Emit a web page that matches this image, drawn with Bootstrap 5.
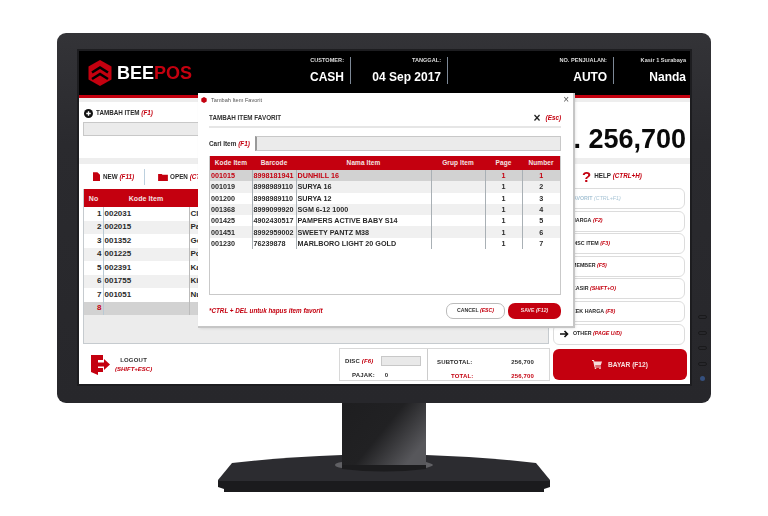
<!DOCTYPE html>
<html lang="id"><head><meta charset="utf-8"><title>BeePOS</title>
<link href="https://cdn.jsdelivr.net/npm/bootstrap@5.3.0/dist/css/bootstrap.min.css" rel="stylesheet">
<style>
html,body{height:516px;overflow:hidden;background:#fff}
body{font-family:"Liberation Sans",Arial,sans-serif;color:#2a2a2a;font-size:7px}
.mon{width:654px;height:370px;margin:33px 0 0 57px;padding:18px 21px 19px 22px;border-radius:9px;background:linear-gradient(180deg,#333337,#2a2a2e 30%,#27272b);position:relative}
.scr{width:611px;height:333px;background:#fff;position:relative;overflow:hidden;box-shadow:0 0 0 2px #1d1d20;filter:blur(.35px)}
.hdr{height:47px;background:#000;border-bottom:3px solid #c4000f;color:#fff}
.logo-t{font-size:18px;font-weight:700;margin-left:5px}
.logo-t span{color:#c4000f}
.hf{height:27px;margin-bottom:5px;text-align:right;display:flex;flex-direction:column;justify-content:space-between;padding-right:6px;border-right:1px solid #7d8896;box-sizing:content-box}
.hf small{font-size:5.6px;font-weight:700;line-height:7px;color:#ddd}
.hf b{font-size:12px;line-height:14px}
.hf.last{border:0;padding-right:0}
.k{color:#c4000f;font-style:italic;font-weight:700}
.lc{width:474px}
.rc{width:137px}
.strip{height:4px;background:#eee}
.band{height:6px;background:#eee}
.top-l{height:56px;padding:6px 4px}
.lab{font-size:6.3px;font-weight:700}
.inp{background:#ebebeb;border:1px solid #c8c8c8;border-radius:0;padding:0;min-height:0}
.i-main{height:14px;margin-top:4px}
.tb{height:25px;padding:0 14px}
.tb-sep{width:1px;height:16px;background:#bcd0de;margin:0 13px 0 10px}
.box{height:155px;margin:0 4px;background:#ececec;border:1px solid #c6cbcf;border-top:0;overflow:hidden}
.gt{table-layout:fixed;margin:0;width:100%;font-weight:700;font-size:8px;--bs-table-bg:transparent;--bs-table-striped-bg:#f0f0f0}
.gt>:not(caption)>*>*{padding:0 1px;border:0;line-height:1;vertical-align:middle;color:#2a2a2a;box-shadow:none}
.gt thead th{background:#c4000f;color:#f3e4e4;text-align:center;font-size:7px;letter-spacing:.1px}
.lt thead tr{height:18px}
.lt tbody tr{height:13.5px;background:#fff}
.lt tbody tr:nth-child(even){background:#f0f0f0}
.lt td:nth-child(1){text-align:right;border-right:1px solid #b9c9d4}
.lt td:nth-child(2){border-right:1px solid #bbb;padding-left:1px}
.lt .cur{background:#d2d2d2!important}
.lt .cur td{color:#c4000f}
.foot-l{height:40px;padding:4px 3px 3px 12px}
.lo{font-size:6px;font-weight:700;line-height:9px;text-align:center;margin-left:5px}
.pnl{width:211px;height:33px;border:1px solid #d8d8d8;font-size:6px;font-weight:700;letter-spacing:.15px}
.pl{width:88px;border-right:1px solid #ccc;padding:7px 5px 2px}
.pr{flex:1;padding:9px 15px 2px 9px}
.i-disc{width:40px;height:10px;margin-left:8px;background:#e9e9e9}
.amt{height:56px;padding:22px 4px 0 0;font-size:27px;font-weight:700;color:#0a0a0a;line-height:30px;white-space:nowrap}
.hlp{height:24px;padding-left:29px;font-size:6.300px;font-weight:700}
.qm{font-size:15px;color:#c4000f;font-weight:700;line-height:1;margin-right:3px}
.rb{width:132px;height:21px;margin-bottom:1.6px;border:1px solid #dcdcdc;border-radius:6px;background:#fff;padding:0 0 0 18px;font-size:5.3px;font-weight:700;text-align:left;color:#2a2a2a;display:flex;align-items:center;--bs-btn-font-size:5.3px;white-space:nowrap}
.rb.off{color:#a9c5d6;padding-left:16px}
.rb.off .k{color:#a9c5d6;font-weight:400}
.rb.oth{padding-left:6px;gap:4px}
.pay{width:134px;height:31px;margin-top:3px;background:#c4000f;border:0;border-radius:6px;color:#f6dcdc;font-size:6.600px;--bs-btn-font-size:6.600px;font-weight:700;display:flex;align-items:center;justify-content:center;gap:6px}
.dlg{position:absolute;left:119px;top:42px;width:375px;height:233px;background:#fff;box-shadow:1px 1px 0 1px #c6c6c6,2px 2px 3px rgba(0,0,0,.15);padding:0 12px 0 11px}
.dt{height:14px;margin:0 -8px;font-size:5.6px;color:#555}
.dh{height:18px;margin-top:3px;border-bottom:2px solid #e6e6e6;font-size:6.300px;font-weight:700;color:#333}
.dc{margin-top:8px;height:15px;font-size:6.400px;font-weight:700}
.i-cari{flex:1;height:15px;margin-left:5px;border-left:2px solid #999}
.dbox{height:139px;margin-top:5px;border:1px solid #c9c9c9;border-top:0;overflow:hidden}
.ft thead tr{height:14px}
.ft tbody tr{height:11.3px;background:#fff}
.ft tbody tr:nth-child(even){background:#f0f0f0}
.ft{font-size:7.2px}
.ft thead th{font-size:6.500px}
.ft td{border-right:1px solid #a9b0b5!important;white-space:nowrap;overflow:hidden}
.ft td:last-child{border-right:0!important}
.ft .sel{background:#d2d2d2!important}
.ft .sel td{color:#c4000f}
.ft .mid{text-align:center}
.df{height:31px}
.note{font-size:6.300px;color:#c4000f;font-style:italic;font-weight:700}
.bc{height:16px;padding:0;border-radius:7px;font-size:5.200px;font-weight:700;--bs-btn-font-size:5.200px;line-height:1}
.bc-a{width:59px;background:#fff;border:1px solid #bbb;color:#333}
.bc-b{width:53px;margin-left:3px;background:#c4000f;border:0;color:#f6dcdc}
.bc-b .k{color:#f6dcdc}
.ctl{position:absolute;left:641px;width:9px;height:4px;border:1px solid #1a1a1c;border-radius:2px}
.pw{position:absolute;left:643px;top:343px;width:5px;height:5px;border-radius:50%;background:#35507e}
.stand{display:block;margin-left:214px}
</style></head><body>
<div class="mon">
 <span class="ctl" style="top:282px"></span><span class="ctl" style="top:298px"></span><span class="ctl" style="top:313px"></span><span class="ctl" style="top:329px"></span><span class="pw"></span>
 <div class="scr d-flex flex-column">
  <div class="hdr d-flex align-items-center">
   <div class="d-flex align-items-center flex-shrink-0" style="width:175px;padding-left:9px">
    <svg width="24" height="26" viewBox="0 0 24 26"><path fill="#c4000f" d="M12 0 23.500 6.500v13L12 26 .5 19.500v-13z"/><path fill="none" stroke="#000" stroke-width="2.600" d="M4 12.500 12 7.500l8 5M4 19l8-5 8 5"/></svg>
    <div class="logo-t">BEE<span>POS</span></div>
   </div>
   <div class="hf" style="width:90px"><small>CUSTOMER:</small><b>CASH</b></div>
   <div class="hf" style="width:90px"><small>TANGGAL:</small><b>04 Sep 2017</b></div>
   <div class="hf" style="width:159px"><small>NO. PENJUALAN:</small><b>AUTO</b></div>
   <div class="hf last" style="width:72px"><small>Kasir 1 Surabaya</small><b>Nanda</b></div>
  </div>
  <div class="d-flex flex-grow-1">
   <div class="lc d-flex flex-column">
    <div class="strip"></div>
    <div class="top-l">
     <div class="d-flex align-items-center lab" style="padding-left:1px;height:10px">
      <svg width="9" height="9" viewBox="0 0 10 10" style="margin-right:3px"><circle cx="5" cy="5" r="5" fill="#111"/><path d="M5 2.500v5M2.500 5h5" stroke="#fff" stroke-width="1.500"/></svg>TAMBAH ITEM&nbsp;<span class="k">(F1)</span>
     </div>
     <input class="form-control inp i-main" aria-label="Tambah item">
    </div>
    <div class="band"></div>
    <div class="tb d-flex align-items-center lab">
     <svg width="7" height="9" viewBox="0 0 8 10" style="margin-right:3px"><path fill="#c4000f" d="M0 0h5l3 3v7H0z"/></svg>NEW&nbsp;<span class="k">(F11)</span>
     <span class="tb-sep"></span>
     <svg width="10" height="8" viewBox="0 0 11 9" style="margin-right:2px"><path fill="#c4000f" d="M0 1h4l1 1h6v7H0z"/></svg>OPEN&nbsp;<span class="k">(CT</span>
    </div>
    <div class="box">
     <table class="table gt lt">
      <colgroup><col style="width:19px"><col style="width:86px"><col></colgroup>
      <thead><tr><th>No</th><th>Kode Item</th><th></th></tr></thead>
      <tbody>
       <tr><td>1</td><td>002031</td><td>Cl</td></tr>
       <tr><td>2</td><td>002015</td><td>Pa</td></tr>
       <tr><td>3</td><td>001352</td><td>Go</td></tr>
       <tr><td>4</td><td>001225</td><td>Po</td></tr>
       <tr><td>5</td><td>002391</td><td>Ka</td></tr>
       <tr><td>6</td><td>001755</td><td>Kit</td></tr>
       <tr><td>7</td><td>001051</td><td>Nu</td></tr>
       <tr class="cur"><td>8</td><td></td><td></td></tr>
      </tbody>
     </table>
    </div>
    <div class="foot-l d-flex align-items-start">
     <div class="d-flex align-items-center" style="height:33px">
      <svg width="19" height="20" viewBox="0 0 19 20"><path fill="#c4000f" d="M0 0h12v5H7v8h5v4H7v3l-7-3z"/><path fill="#c4000f" d="M7 7.500h6V4l6 5.500-6 5.500v-3.500H7z"/></svg>
      <div class="lo"><div style="color:#333;letter-spacing:.2px">LOGOUT</div><div class="k">(SHIFT+ESC)</div></div>
     </div>
     <div class="pnl ms-auto d-flex">
      <div class="pl">
       <div class="d-flex align-items-center">DISC&nbsp;<span class="k">(F6)</span><input class="form-control inp i-disc" aria-label="Disc"></div>
       <div class="d-flex" style="padding-left:7px;margin-top:5px">PAJAK:<span style="margin-left:10px">0</span></div>
      </div>
      <div class="pr">
       <div class="d-flex justify-content-between"><span>SUBTOTAL:</span><span>256,700</span></div>
       <div class="d-flex justify-content-between" style="margin-top:5px;color:#c4000f"><span style="padding-left:14px">TOTAL:</span><span>256,700</span></div>
      </div>
     </div>
    </div>
   </div>
   <div class="rc d-flex flex-column">
    <div class="strip"></div>
    <div class="amt d-flex justify-content-end">Rp. 256,700</div>
    <div class="band"></div>
    <div class="hlp d-flex align-items-center"><span class="qm">?</span>HELP&nbsp;<span class="k">(CTRL+H)</span></div>
    <button class="btn rb off">FAVORIT&nbsp;<span class="k">(CTRL+F1)</span></button>
    <button class="btn rb">HARGA&nbsp;<span class="k">(F2)</span></button>
    <button class="btn rb">DISC ITEM&nbsp;<span class="k">(F3)</span></button>
    <button class="btn rb">MEMBER&nbsp;<span class="k">(F5)</span></button>
    <button class="btn rb">KASIR&nbsp;<span class="k">(SHIFT+O)</span></button>
    <button class="btn rb">CEK HARGA&nbsp;<span class="k">(F8)</span></button>
    <button class="btn rb oth"><svg width="9" height="8" viewBox="0 0 9 8"><path d="M0 4h7M4.500 1 7.500 4l-3 3" fill="none" stroke="#111" stroke-width="1.600"/></svg><span>OTHER&nbsp;<span class="k">(PAGE U/D)</span></span></button>
    <button class="btn pay"><svg width="10" height="9" viewBox="0 0 10 9"><path fill="#f6dcdc" d="M0 0h2l.4 1.500H10L8.700 5.500H3.200L3.400 6.500H9v1H2.500L1.200 1H0z"/><circle cx="3.500" cy="8.300" r=".8" fill="#f6dcdc"/><circle cx="8" cy="8.300" r=".8" fill="#f6dcdc"/></svg>BAYAR (F12)</button>
   </div>
  </div>
  <div class="dlg d-flex flex-column">
   <div class="dt d-flex align-items-center justify-content-between">
    <span class="d-flex align-items-center"><svg width="6" height="6" viewBox="0 0 6 6" class="me-1"><path fill="#c4000f" d="M3 0 5.700 1.500v3L3 6 .3 4.500v-3z"/></svg>Tambah Item Favorit</span>
    <span style="font-size:10px;line-height:1;color:#555">×</span>
   </div>
   <div class="dh d-flex align-items-center justify-content-between"><span>TAMBAH ITEM FAVORIT</span><span class="d-flex align-items-center"><span style="font-size:12px;line-height:1;color:#222;margin-right:5px">×</span><span class="k">(Esc)</span></span></div>
   <div class="dc d-flex align-items-center"><span>Cari Item&nbsp;<span class="k">(F1)</span></span><input class="form-control inp i-cari" aria-label="Cari item"></div>
   <div class="dbox">
    <table class="table gt ft">
     <colgroup><col style="width:42px"><col style="width:44px"><col style="width:135px"><col style="width:54px"><col style="width:37px"><col></colgroup>
     <thead><tr><th>Kode Item</th><th>Barcode</th><th>Nama Item</th><th>Grup Item</th><th>Page</th><th>Number</th></tr></thead>
     <tbody>
      <tr class="sel"><td>001015</td><td>8998181941</td><td>DUNHILL 16</td><td></td><td class="mid">1</td><td class="mid">1</td></tr>
      <tr><td>001019</td><td>8998989110</td><td>SURYA 16</td><td></td><td class="mid">1</td><td class="mid">2</td></tr>
      <tr><td>001200</td><td>8998989110</td><td>SURYA 12</td><td></td><td class="mid">1</td><td class="mid">3</td></tr>
      <tr><td>001368</td><td>8999099920</td><td>SGM 6-12 1000</td><td></td><td class="mid">1</td><td class="mid">4</td></tr>
      <tr><td>001425</td><td>4902430517</td><td>PAMPERS ACTIVE BABY S14</td><td></td><td class="mid">1</td><td class="mid">5</td></tr>
      <tr><td>001451</td><td>8992959002</td><td>SWEETY PANTZ M38</td><td></td><td class="mid">1</td><td class="mid">6</td></tr>
      <tr><td>001230</td><td>76239878</td><td>MARLBORO LIGHT 20 GOLD</td><td></td><td class="mid">1</td><td class="mid">7</td></tr>
     </tbody>
    </table>
   </div>
   <div class="df d-flex align-items-center justify-content-between">
    <span class="note">*CTRL + DEL untuk hapus item favorit</span>
    <span class="d-flex"><button class="btn bc bc-a">CANCEL <span class="k">(ESC)</span></button><button class="btn bc bc-b">SAVE <span class="k">(F12)</span></button></span>
   </div>
  </div>
 </div>
</div>
<svg class="stand" width="340" height="92" viewBox="0 0 340 92">
 <defs><linearGradient id="ng" x1="0" y1="0" x2="1" y2=".6"><stop offset="0" stop-color="#1e1e20"/><stop offset=".55" stop-color="#212123"/><stop offset="1" stop-color="#57575b"/></linearGradient></defs>
 <path fill="#2c2c30" d="M18 60Q70 54 128 52H212Q270 54 322 60L336 77V84H4V77z"/>
 <path fill="#1b1b1d" d="M4 78H336V84L330 86V89H10V86L4 84z"/>
 <path fill="#606064" d="M128 59H212q7 2 7 3t-7 3H128q-7-1-7-3t7-3"/>
 <path fill="#1c1c1e" d="M128 62H212V66Q170 71 128 66z"/>
 <path fill="url(#ng)" d="M128 0H212V62H128z"/>
</svg>
<script src="https://cdn.jsdelivr.net/npm/bootstrap@5.3.0/dist/js/bootstrap.bundle.min.js"></script>
</body></html>
